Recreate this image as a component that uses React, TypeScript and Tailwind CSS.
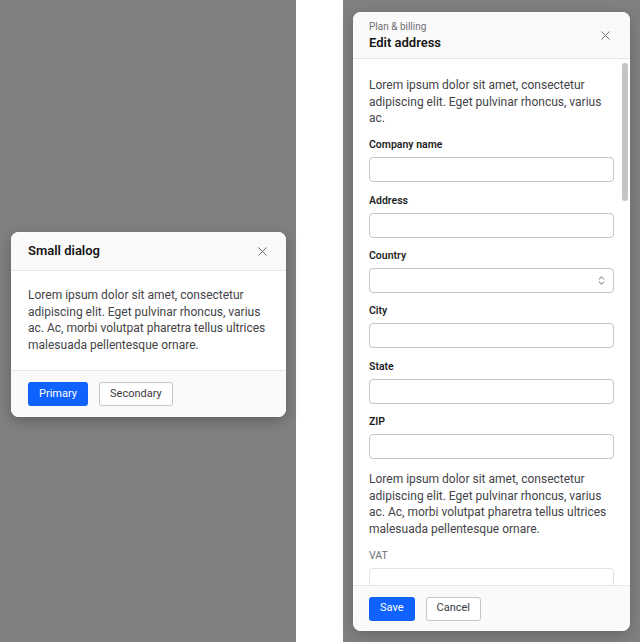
import { X, ChevronsUpDown } from "lucide-react"

const lorem =
  "Lorem ipsum dolor sit amet, consectetur adipiscing elit. Eget pulvinar rhoncus, varius ac. Ac, morbi volutpat pharetra tellus ultrices malesuada pellentesque ornare."
const loremShort = "Lorem ipsum dolor sit amet, consectetur adipiscing elit. Eget pulvinar rhoncus, varius ac."

function Field({ label, select }: { label: string; select?: boolean }) {
  return (
    <div className="flex flex-col">
      <label className="text-[10.5px] leading-[16px] font-semibold text-[#1f1f1f]">{label}</label>
      <div className="mt-[4px] h-[25px] rounded-[4px] border border-[#c4c4c8] bg-white flex items-center justify-end pr-[6px]">
        {select && <ChevronsUpDown size={11} strokeWidth={2} className="text-[#55555a]" />}
      </div>
    </div>
  )
}

function SmallDialog() {
  return (
    <div className="w-[275px] rounded-[8px] bg-white shadow-[0_4px_14px_rgba(0,0,0,0.25)] overflow-hidden">
      <div className="h-[39px] bg-[#fafafa] border-b border-[#e6e6e6] flex items-center justify-between pl-[17px] pr-[16px]">
        <h2 className="text-[13px] font-semibold text-[#161616]">Small dialog</h2>
        <X size={15} strokeWidth={1.6} className="text-[#6f6f75]" />
      </div>
      <div className="px-[17px] py-[16px] bg-white">
        <p className="text-[12px] leading-[16.7px] text-[#444448]">{lorem}</p>
      </div>
      <div className="bg-[#fafafa] border-t border-[#e6e6e6] px-[17px] pt-[11px] pb-[11px] flex gap-[11px]">
        <button className="h-[24px] px-[11px] rounded-[3px] bg-[#0f62fe] text-white text-[11px]">Primary</button>
        <button className="h-[24px] px-[10px] rounded-[3px] bg-white border border-[#c6c6c6] text-[#3a3a3e] text-[11px]">
          Secondary
        </button>
      </div>
    </div>
  )
}

function EditAddressDialog() {
  return (
    <div className="w-[277px] h-[619px] rounded-[8px] bg-white shadow-[0_4px_14px_rgba(0,0,0,0.2)] overflow-hidden flex flex-col">
      <div className="h-[47px] shrink-0 bg-[#fafafa] border-b border-[#e6e6e6] flex items-center justify-between pl-[16px] pr-[17px]">
        <div className="flex flex-col pt-[2px]">
          <span className="text-[10px] leading-[14px] text-[#6f6f75]">Plan &amp; billing</span>
          <span className="text-[13px] leading-[18px] font-semibold text-[#161616]">Edit address</span>
        </div>
        <X size={15} strokeWidth={1.6} className="text-[#6f6f75]" />
      </div>
      <div className="relative flex-1 overflow-hidden bg-white">
        <div className="px-[16px] pt-[18px] flex flex-col">
          <p className="text-[12px] leading-[16.7px] text-[#444448]">{loremShort}</p>
          <div className="mt-[10px] flex flex-col gap-[10.4px]">
            <Field label="Company name" />
            <Field label="Address" />
            <Field label="Country" select />
            <Field label="City" />
            <Field label="State" />
            <Field label="ZIP" />
          </div>
          <p className="mt-[12px] text-[12px] leading-[16.7px] text-[#444448]">{lorem}</p>
          <span className="mt-[10px] text-[10.5px] leading-[16px] text-[#6f6f75]">VAT</span>
          <div className="mt-[4px] h-[25px] rounded-[4px] border border-[#e2e2e4]" />
        </div>
        <div className="absolute right-[2px] top-[4px] w-[6px] h-[138px] rounded-full bg-[#c4c4c6]" />
      </div>
      <div className="h-[46px] shrink-0 bg-[#fafafa] border-t border-[#e6e6e6] px-[16px] flex items-center gap-[11px]">
        <button className="h-[24px] px-[11px] rounded-[3px] bg-[#0f62fe] text-white text-[11px]">Save</button>
        <button className="h-[24px] px-[10px] rounded-[3px] bg-white border border-[#c6c6c6] text-[#3a3a3e] text-[11px]">
          Cancel
        </button>
      </div>
    </div>
  )
}

export default function App() {
  return (
    <div className="w-[640px] h-[644px] bg-white flex font-['Roboto','Noto_Sans',sans-serif]">
      <div className="w-[296px] h-[642px] bg-[#808080] pt-[232px] pl-[11px]">
        <SmallDialog />
      </div>
      <div className="ml-[47px] w-[297px] h-[642px] bg-[#808080] pt-[12px] pl-[10px]">
        <EditAddressDialog />
      </div>
    </div>
  )
}
